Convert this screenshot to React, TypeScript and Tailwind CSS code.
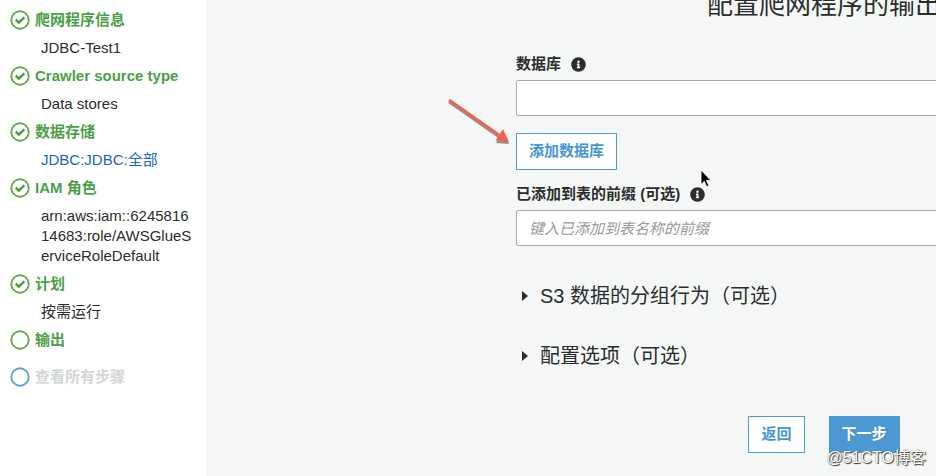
import { FaInfoCircle } from "react-icons/fa"

interface Step {
  title: string
  status: "done" | "current" | "pending"
  detail?: string
  link?: boolean
}

const steps: Step[] = [
  { title: "爬网程序信息", status: "done", detail: "JDBC-Test1" },
  { title: "Crawler source type", status: "done", detail: "Data stores" },
  { title: "数据存储", status: "done", detail: "JDBC:JDBC:全部", link: true },
  { title: "IAM 角色", status: "done", detail: "arn:aws:iam::624581614683:role/AWSGlueServiceRoleDefault" },
  { title: "计划", status: "done", detail: "按需运行" },
  { title: "输出", status: "current" },
  { title: "查看所有步骤", status: "pending" },
]

function StepIcon({ status }: { status: Step["status"] }) {
  return (
    <svg
      viewBox="0 0 20 20"
      className={`w-5 h-5 shrink-0 ${status === "pending" ? "text-[#5a9fd8]" : "text-[#5fae46]"}`}
      fill="none"
      stroke="currentColor"
      aria-hidden="true"
    >
      <circle cx="10" cy="10" r="8.7" strokeWidth="1.9" />
      {status === "done" && <path d="M5.7 9.700 8.800 12.600 14.300 7.300" strokeWidth="2.5" stroke="#4c9c45" />}
    </svg>
  )
}

function Sidebar() {
  return (
    <nav className="w-[206px] shrink-0 bg-white pt-2.5 pl-2.5 pr-[11px]">
      <ol>
        {steps.map((step) => (
          <li key={step.title} className={step.detail ? "pb-2" : "pb-[17px]"}>
            <div className="flex items-center gap-[5px]">
              <StepIcon status={step.status} />
              <span
                className={`font-bold leading-5 whitespace-nowrap ${
                  step.status === "pending" ? "text-[#d3d6d6]" : "text-[#4c9f47]"
                }`}
              >
                {step.title}
              </span>
            </div>
            {step.detail && (
              <div className="mt-2 pl-[31px] leading-5 break-all">
                {step.link ? (
                  <a href="#data-stores" className="text-[#2264b8]">{step.detail}</a>
                ) : (
                  step.detail
                )}
              </div>
            )}
          </li>
        ))}
      </ol>
    </nav>
  )
}

function FieldLabel({ htmlFor, text }: { htmlFor: string; text: string }) {
  return (
    <div className="flex items-center gap-2.5 leading-5">
      <label htmlFor={htmlFor} className="font-bold">{text}</label>
      <FaInfoCircle className="w-[15px] h-[15px]" aria-hidden="true" />
    </div>
  )
}

function Expander({ text }: { text: string }) {
  return (
    <button type="button" aria-expanded="false" className="flex items-center gap-3 pl-1.5 text-xl leading-7">
      <svg viewBox="0 0 6 10" className="w-1.5 h-2.5" fill="currentColor" aria-hidden="true">
        <path d="M0 0 6 5 0 10Z" />
      </svg>
      {text}
    </button>
  )
}

function ArrowMark() {
  return (
    <svg viewBox="0 0 66 52" className="absolute left-[447px] top-[97px] w-[66px] h-[52px]" aria-hidden="true">
      <g transform="translate(0 2)" fill="#777" stroke="#777" opacity="0.8">
        <path d="M2 3 52 38" strokeWidth="2.6" />
        <path d="M62 45 49 44 56 32.500Z" stroke="none" />
      </g>
      <path d="M2 3 52 38" stroke="#ee6352" strokeWidth="2.8" />
      <path d="M62 45 48.500 43.500 56 32Z" fill="#ee6352" />
    </svg>
  )
}

function Cursor() {
  return (
    <svg viewBox="0 0 12 19" className="absolute left-[700px] top-[169px] w-3 h-[19px]" aria-hidden="true">
      <path
        d="M1 1V15.500L4.300 12.400 6.700 17.800 8.900 16.800 6.600 11.600H11Z"
        fill="#000"
        stroke="#fff"
        strokeWidth="0.9"
      />
    </svg>
  )
}

export default function App() {
  return (
    <div className="relative flex min-h-screen overflow-hidden bg-[#f5f7f7] text-[15px] text-[#2b2d2d] font-['Liberation_Sans','Noto_Sans_CJK_SC',sans-serif]">
      <Sidebar />
      <main className="flex-1 min-w-0 overflow-hidden pl-[310px]">
        <form className="w-[616px]" onSubmit={(e) => e.preventDefault()}>
          <h1 className="-mt-3 mb-8 text-center text-[26px] leading-[34px]">配置爬网程序的输出</h1>

          <FieldLabel htmlFor="database" text="数据库" />
          <input
            id="database"
            type="text"
            className="mt-1.5 block w-full h-9 px-3 bg-white border border-[#a9adad] rounded-xs"
          />
          <button
            type="button"
            className="mt-[17px] h-[37px] px-3 bg-white border border-[#4f9ad3] font-bold text-[#4796d2]"
          >
            添加数据库
          </button>

          <div className="mt-3.5">
            <FieldLabel htmlFor="prefix" text="已添加到表的前缀 (可选)" />
          </div>
          <input
            id="prefix"
            type="text"
            placeholder="键入已添加到表名称的前缀"
            className="mt-1.5 block w-full h-9 px-3 bg-white border border-[#a9adad] rounded-xs placeholder:italic placeholder:text-[#999]"
          />

          <div className="mt-9 flex flex-col items-start gap-8">
            <Expander text="S3 数据的分组行为（可选）" />
            <Expander text="配置选项（可选）" />
          </div>

          <div className="mt-[46px] flex justify-center gap-6">
            <button type="button" className="h-[37px] px-3 bg-white border border-[#4f9ad3] font-bold text-[#4796d2]">
              返回
            </button>
            <button type="submit" className="h-[37px] px-3 bg-[#4b98d2] border border-[#4b98d2] font-bold text-white">
              下一步
            </button>
          </div>
        </form>
      </main>

      <ArrowMark />
      <Cursor />
      <span className="absolute right-2.5 bottom-1.5 text-base leading-6 text-white [text-shadow:1px_1px_1px_#333,0_0_1px_#555]">
        @51CTO博客
      </span>
    </div>
  )
}
